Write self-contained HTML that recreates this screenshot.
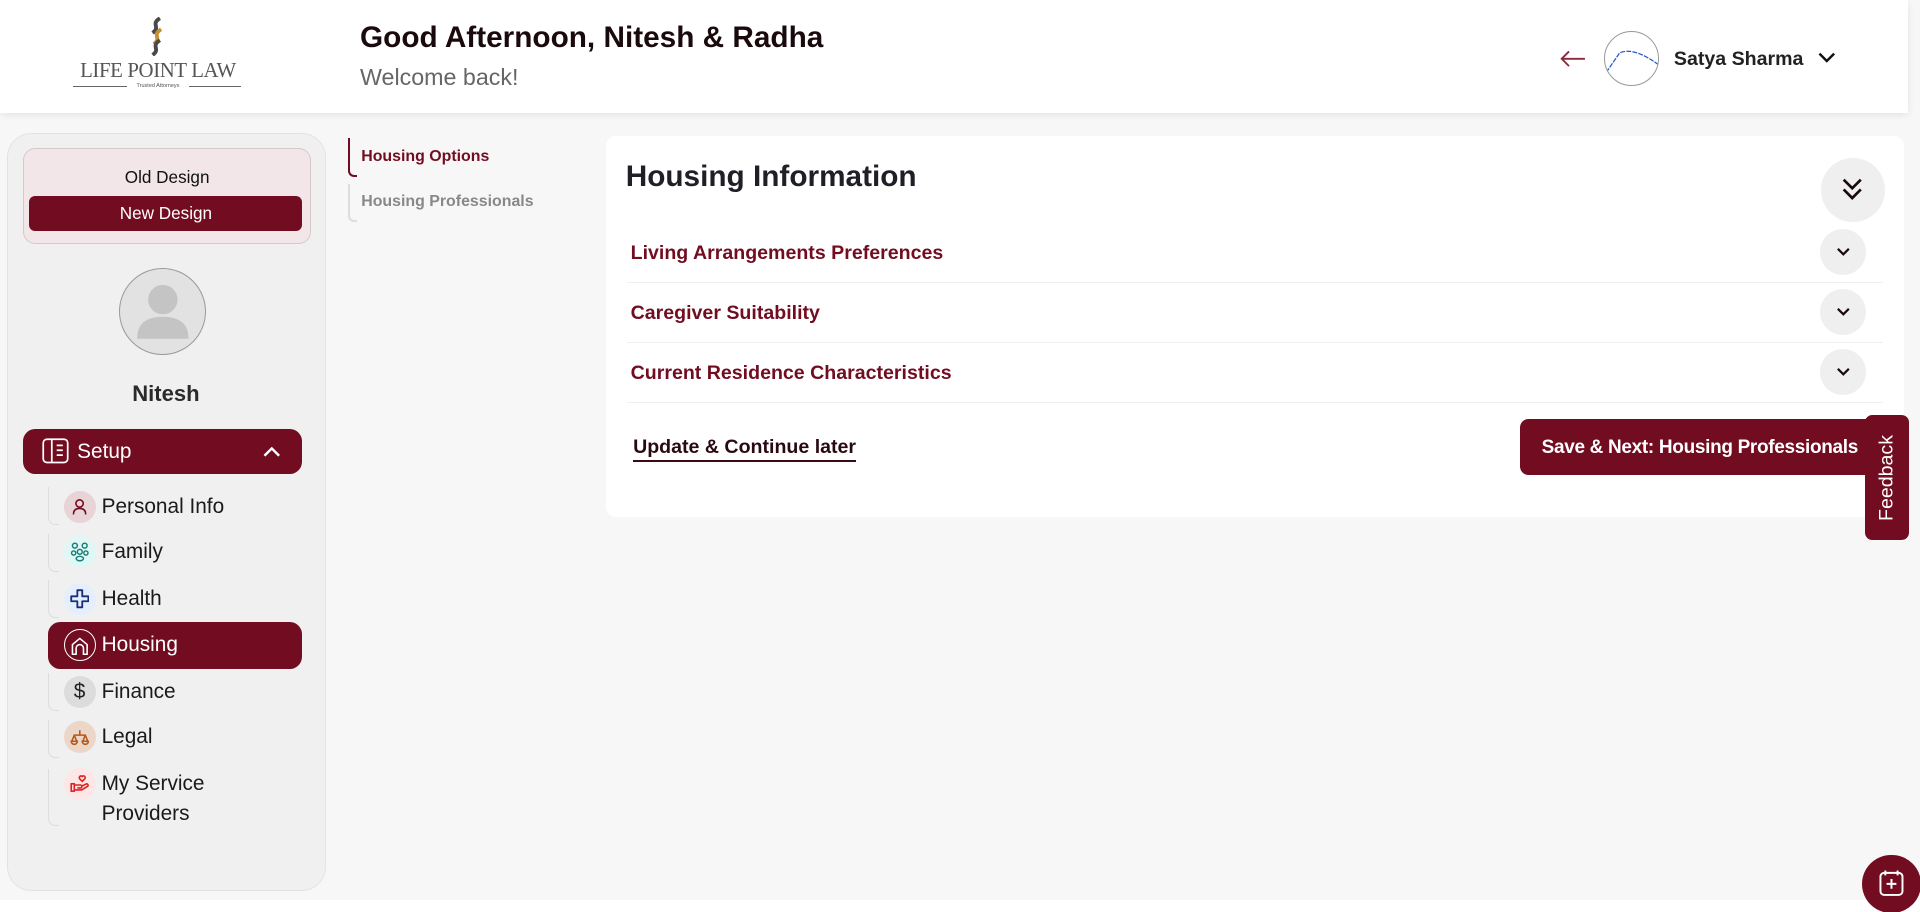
<!DOCTYPE html>
<html><head><meta charset="utf-8"><style>
html,body{margin:0;padding:0;width:1920px;height:912px;overflow:hidden;background:#fff}
#root{zoom:1.2245;width:1568px;height:745px;position:relative;font-family:"Liberation Sans",Arial,sans-serif;background:#fff}
.abs{position:absolute}
.page{left:0;top:92px;width:1568px;height:643px;background:#f7f7f7}
.header{left:0;top:0;width:1558px;height:92px;background:#fff;box-shadow:0 2px 6px rgba(0,0,0,.08)}
.side{left:6px;top:109px;width:259px;height:617px;background:#f0f0f0;border:1px solid #e3e3e3;border-radius:20px}
.item{position:absolute;left:52px;height:26px;display:flex;align-items:center;font-size:17px;color:#1a1a1a}
.ic{width:26px;height:26px;border-radius:50%;display:flex;align-items:center;justify-content:center;margin-right:5px;flex:none}
.vl{position:absolute;left:39px;width:8px;border-left:1.5px solid #ddd;border-bottom:1.5px solid #ddd;border-bottom-left-radius:6px}
.row{position:absolute;left:512px;width:1026px;height:48px;border-bottom:1.5px solid #efefef}
.row span{position:absolute;left:3px;top:16px;font-size:16px;font-weight:bold;color:#720d21}
.chev{position:absolute;right:14px;top:5px;width:38px;height:38px;border-radius:50%;background:#efefef;display:flex;align-items:center;justify-content:center}
</style></head><body><div id="root">
<div class="abs page"></div>
<div class="abs" style="left:1558px;top:0;width:10px;height:92px;background:#f7f7f7"></div>
<div class="abs header"></div>
<!-- logo -->
<svg class="abs" style="left:118px;top:14px" width="20" height="32" viewBox="0 0 20 32"><path d="M13 1C5 6 14 8 7 13" stroke="#4a4a4a" stroke-width="3.2" fill="none"/><path d="M14 10C6 15 15 17 8 22" stroke="#c8902f" stroke-width="3.2" fill="none"/><path d="M13 19C5 24 14 26 7 31" stroke="#4a4a4a" stroke-width="3.2" fill="none"/></svg>
<div class="abs" style="left:59px;top:47px;width:140px;text-align:center;font-family:'Liberation Serif',serif;font-size:17px;color:#555;letter-spacing:-0.3px">LIFE POINT LAW</div>
<div class="abs" style="left:60px;top:70px;width:137px;height:1px;background:#666"></div>
<div class="abs" style="left:104px;top:67px;width:50px;height:7px;background:#fff;font-size:4.5px;color:#555;text-align:center;line-height:7px">Trusted Attorneys</div>
<div class="abs" style="left:294px;top:17px;font-size:24.3px;font-weight:bold;color:#1a0a0e">Good Afternoon, Nitesh &amp; Radha</div>
<div class="abs" style="left:294px;top:52px;font-size:19px;color:#666">Welcome back!</div>
<svg class="abs" style="left:1272px;top:40px" width="24" height="16" viewBox="0 0 24 16"><path d="M22 8H3M9 2L3 8l6 6" stroke="#8a2a3a" stroke-width="1.5" fill="none"/></svg>
<div class="abs" style="left:1310px;top:25px;width:45px;height:45px;border-radius:50%;border:1px solid #999;box-sizing:border-box;overflow:hidden"><svg width="45" height="45"><path d="M1 33L12 17Q24 12 44 27" stroke="#2255cc" stroke-width="1" fill="none" stroke-dasharray="4 1"/></svg></div>
<div class="abs" style="left:1367px;top:39px;font-size:16px;font-weight:bold;color:#222">Satya Sharma</div>
<svg class="abs" style="left:1484px;top:41px" width="16" height="12" viewBox="0 0 16 12"><path d="M2 3l6 6 6-6" stroke="#111" stroke-width="2" fill="none"/></svg>
<!-- sidebar -->
<div class="abs side"></div>
<div class="abs" style="left:19px;top:121px;width:233px;height:77px;background:#f2e6e8;border:1px solid #d8c8cb;border-radius:10px"></div>
<div class="abs" style="left:19px;top:136px;width:235px;text-align:center;font-size:14px;color:#111">Old Design</div>
<div class="abs" style="left:24px;top:160px;width:223px;height:29px;background:#720d21;border-radius:5px;color:#fff;font-size:14px;text-align:center;line-height:29px">New Design</div>
<div class="abs" style="left:97px;top:219px;width:71px;height:71px;border-radius:50%;background:#e2e2e2;border:1px solid #999;box-sizing:border-box;overflow:hidden"><svg width="71" height="71"><circle cx="35" cy="25" r="12" fill="#c4c4c4"/><path d="M14 57Q14 39 35 39Q56 39 56 57z" fill="#c4c4c4"/></svg></div>
<div class="abs" style="left:6px;top:311px;width:259px;text-align:center;font-size:18px;font-weight:bold;color:#2a2a2a">Nitesh</div>
<div class="abs" style="left:19px;top:350px;width:228px;height:37px;background:#720d21;border-radius:10px"></div>
<svg class="abs" style="left:34px;top:358px" width="22" height="21" viewBox="0 0 22 21"><rect x="1" y="1" width="20" height="19" rx="3" stroke="#fff" stroke-width="1.4" fill="none"/><path d="M8 1v19M12 6h5M12 10h5M12 14h5" stroke="#fff" stroke-width="1.4"/></svg>
<div class="abs" style="left:63px;top:359px;font-size:17px;color:#fff">Setup</div>
<svg class="abs" style="left:214px;top:364px" width="16" height="10" viewBox="0 0 16 10"><path d="M2 8l6-6 6 6" stroke="#fff" stroke-width="2" fill="none"/></svg>
<div class="vl" style="top:398px;height:30px"></div>
<div class="vl" style="top:436px;height:30px"></div>
<div class="vl" style="top:474px;height:30px"></div>
<div class="vl" style="top:550px;height:30px"></div>
<div class="vl" style="top:588px;height:30px"></div>
<div class="vl" style="top:628px;height:46px"></div>
<div class="item" style="top:401px"><div class="ic" style="background:#e8d3d7"><svg width="14" height="14" viewBox="0 0 14 14"><circle cx="7" cy="4.5" r="3" stroke="#720d21" stroke-width="1.3" fill="none"/><path d="M2 13.5Q2 8.5 7 8.5Q12 8.5 12 13.5" stroke="#720d21" stroke-width="1.3" fill="none"/></svg></div>Personal Info</div>
<div class="item" style="top:438px"><div class="ic" style="background:#dff7f5"><svg width="16" height="16" viewBox="0 0 16 16" fill="none" stroke="#1a7f78" stroke-width="1.2"><circle cx="4" cy="3" r="2"/><circle cx="12" cy="3" r="2"/><circle cx="8" cy="8" r="2"/><circle cx="3" cy="9" r="1.7"/><circle cx="13" cy="9" r="1.7"/><ellipse cx="8" cy="13.5" rx="3" ry="1.8"/></svg></div>Family</div>
<div class="item" style="top:476px"><div class="ic" style="background:#e4eefc"><svg width="16" height="16" viewBox="0 0 16 16"><path d="M6 1h4v5h5v4h-5v5H6v-5H1V6h5z" stroke="#1a2f7a" stroke-width="1.5" fill="none" stroke-linejoin="round"/></svg></div>Health</div>
<div class="abs" style="left:39px;top:508px;width:208px;height:38px;background:#720d21;border-radius:10px"></div>
<div class="item" style="top:514px;color:#fff"><div class="ic" style="border:1.3px solid #fff;box-sizing:border-box"><svg width="16" height="16" viewBox="0 0 16 16"><path d="M2 15V7l6-5 6 5v8h-3v-5a3 3 0 0 0-6 0v5z" stroke="#fff" stroke-width="1.3" fill="none" stroke-linejoin="round"/></svg></div>Housing</div>
<div class="item" style="top:552px"><div class="ic" style="background:#dcdcdc;font-size:17px;color:#222">$</div>Finance</div>
<div class="item" style="top:589px"><div class="ic" style="background:#ecd6c8"><svg width="16" height="14" viewBox="0 0 16 14" fill="none" stroke="#b5581a" stroke-width="1.3"><path d="M8 1v4M3 5h10"/><path d="M1 10a2.5 2.5 0 0 0 5 0z M10 10a2.5 2.5 0 0 0 5 0z"/><path d="M3.5 5L1.5 10M3.5 5l2 5M12.5 5l-2 5M12.5 5l2 5"/></svg></div>Legal</div>
<div class="item" style="top:627px"><div class="ic" style="background:#fde6e6"><svg width="16" height="16" viewBox="0 0 16 16" fill="none" stroke="#e02020" stroke-width="1.3"><path d="M10 6L8 4a1.3 1.3 0 0 1 2-2l0 0a1.3 1.3 0 0 1 2 2z"/><rect x="1" y="8" width="2.5" height="6"/><path d="M3.5 9h5a1.2 1.2 0 0 1 0 2.4H6M3.5 13h6l5-3a1.2 1.2 0 0 0-1.5-1.8L9.5 10"/></svg></div>My Service</div>
<div class="abs" style="left:83px;top:655px;font-size:17px;color:#1a1a1a">Providers</div>
<!-- subnav -->
<div class="abs" style="left:284px;top:113px;width:6px;height:30px;border-left:2px solid #720d21;border-bottom:2px solid #720d21;border-bottom-left-radius:5px"></div>
<div class="abs" style="left:284px;top:150px;width:6px;height:30px;border-left:2px solid #ddd;border-bottom:2px solid #ddd;border-bottom-left-radius:5px"></div>
<div class="abs" style="left:295px;top:121px;font-size:13px;font-weight:bold;color:#720d21">Housing Options</div>
<div class="abs" style="left:295px;top:158px;font-size:13px;font-weight:bold;color:#888">Housing Professionals</div>
<!-- card -->
<div class="abs" style="left:495px;top:111px;width:1060px;height:311px;background:#fff;border-radius:8px"></div>
<div class="abs" style="left:511px;top:131px;font-size:24.3px;font-weight:bold;color:#1f1f28">Housing Information</div>
<div class="abs" style="left:1487px;top:129px;width:52px;height:52px;border-radius:50%;background:#efefef;display:flex;align-items:center;justify-content:center"><svg width="20" height="22" viewBox="0 0 20 22"><path d="M3 3l7 7 7-7M3 11l7 7 7-7" stroke="#1a0a0e" stroke-width="2.2" fill="none"/></svg></div>
<div class="row" style="top:182px"><span>Living Arrangements Preferences</span><div class="chev"><svg width="12" height="8" viewBox="0 0 12 8"><path d="M1.5 1.5L6 6l4.5-4.5" stroke="#1a0a0e" stroke-width="1.8" fill="none"/></svg></div></div>
<div class="row" style="top:231px"><span>Caregiver Suitability</span><div class="chev"><svg width="12" height="8" viewBox="0 0 12 8"><path d="M1.5 1.5L6 6l4.5-4.5" stroke="#1a0a0e" stroke-width="1.8" fill="none"/></svg></div></div>
<div class="row" style="top:280px"><span>Current Residence Characteristics</span><div class="chev"><svg width="12" height="8" viewBox="0 0 12 8"><path d="M1.5 1.5L6 6l4.5-4.5" stroke="#1a0a0e" stroke-width="1.8" fill="none"/></svg></div></div>
<div class="abs" style="left:517px;top:356px;font-size:16px;font-weight:bold;color:#2a0a12;border-bottom:2px solid #3a0a14;padding-bottom:1px">Update &amp; Continue later</div>
<div class="abs" style="left:1241px;top:342px;width:309px;height:46px;background:#720d21;border-radius:7px"></div>
<div class="abs" style="left:1259px;top:357px;font-size:15.5px;letter-spacing:-0.25px;font-weight:bold;color:#fff;white-space:nowrap">Save &amp; Next: Housing Professionals</div>
<div class="abs" style="left:1523px;top:339px;width:36px;height:102px;background:#720d21;border-radius:6px"></div>
<div class="abs" style="left:1541px;top:390px;transform:translate(-50%,-50%) rotate(-90deg);font-size:16px;color:#fff;white-space:nowrap">Feedback</div>
<div class="abs" style="left:1521px;top:698px;width:48px;height:48px;border-radius:50%;background:#720d21"></div>
<svg class="abs" style="left:1534px;top:709px" width="22" height="24" viewBox="0 0 22 24"><rect x="2" y="4" width="18" height="18" rx="3" stroke="#fff" stroke-width="1.6" fill="none"/><path d="M6 2v4M16 2v4M11 9v8M7 13h8" stroke="#fff" stroke-width="1.6"/></svg>
</div></body></html>
